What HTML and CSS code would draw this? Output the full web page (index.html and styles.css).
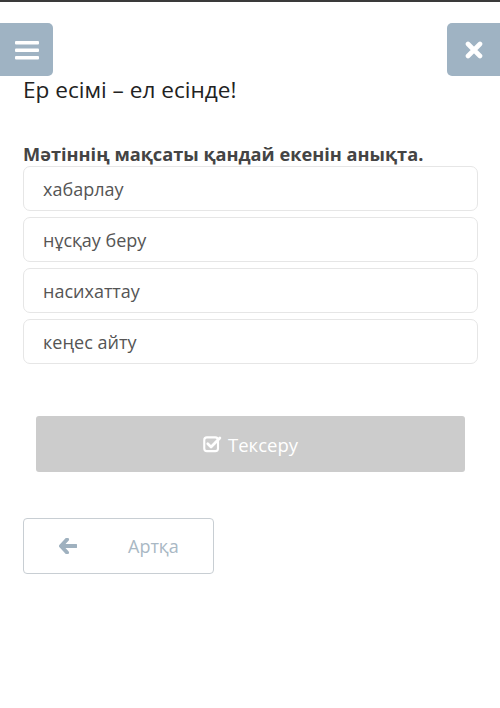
FILE: index.html
```html
<!DOCTYPE html>
<html>
<head>
<meta charset="utf-8">
<link rel="stylesheet" href="styles.css">
</head>
<body>
<div class="topbar"></div>
<div class="header">
  <button class="iconbtn menu" aria-label="menu">
    <svg width="24" height="20" viewBox="0 0 24 20"><rect x="0" y="1" width="24" height="3.4" rx="1" fill="#fff"/><rect x="0" y="8.5" width="24" height="3.4" rx="1" fill="#fff"/><rect x="0" y="16" width="24" height="3.4" rx="1" fill="#fff"/></svg>
  </button>
  <button class="iconbtn close" aria-label="close">
    <svg width="18" height="18" viewBox="0 0 18 18"><path d="M3 3 L15 15 M15 3 L3 15" stroke="#fff" stroke-width="4.6" stroke-linecap="round"/></svg>
  </button>
</div>
<div class="content">
  <h1 class="title">Ер есімі – ел есінде!</h1>
  <p class="question">Мәтіннің мақсаты қандай екенін анықта.</p>
  <div class="options">
    <div class="option">хабарлау</div>
    <div class="option">нұсқау беру</div>
    <div class="option">насихаттау</div>
    <div class="option">кеңес айту</div>
  </div>
  <div class="check-wrap">
    <button class="check">
      <svg width="19" height="18" viewBox="0 0 18 17"><rect x="1.2" y="2.2" width="13" height="13" rx="2.5" fill="none" stroke="#fff" stroke-width="2"/><path d="M4.5 8.3 L7.6 11.3 L16 2.8" fill="none" stroke="#fff" stroke-width="2.6" stroke-linecap="round" stroke-linejoin="round"/></svg>
      <span>Тексеру</span>
    </button>
  </div>
  <button class="back">
    <svg class="arrow" width="18" height="16" viewBox="0 0 18 16"><path d="M8 1.5 L2 8 L8 14.5 M2.5 8 L17 8" fill="none" stroke="#9fb1bf" stroke-width="4" stroke-linecap="round" stroke-linejoin="round"/></svg>
    <span>Артқа</span>
  </button>
</div>
</body>
</html>
```
FILE: styles.css
```css
html, body {
  margin: 0;
  padding: 0;
  background: #fff;
  font-family: "Open Sans", "Noto Sans", sans-serif;
}
.topbar {
  height: 2px;
  background: #3a3a3a;
}
.header {
  display: flex;
  justify-content: space-between;
  margin-top: 21px;
}
.iconbtn {
  width: 53px;
  height: 53px;
  border: none;
  background: #9fb3c3;
  padding: 0;
  display: flex;
  align-items: center;
  justify-content: center;
}
.menu {
  border-radius: 0 5px 5px 0;
}
.close {
  border-radius: 5px 0 0 5px;
}
.content {
  padding: 0 22px 0 23px;
}
.title {
  margin: 0;
  font-weight: 400;
  font-size: 22.6px;
  line-height: 28px;
  color: #222;
}
.question {
  margin: 38px 0 0 0;
  font-weight: 700;
  font-size: 18.2px;
  line-height: 24px;
  color: #444;
}
.options {
  display: flex;
  flex-direction: column;
  gap: 6px;
}
.option {
  height: 45px;
  box-sizing: border-box;
  border: 1px solid #e6e6e6;
  border-radius: 7px;
  padding-left: 19px;
  display: flex;
  align-items: center;
  font-size: 18px;
  color: #555;
}
.check-wrap {
  padding: 0 13px;
  margin-top: 52px;
}
.check {
  width: 100%;
  height: 56px;
  border: none;
  border-radius: 3px;
  background: #cccccc;
  color: #fff;
  font-family: "Open Sans", "Noto Sans", sans-serif;
  font-size: 18.5px;
  display: flex;
  align-items: center;
  justify-content: center;
  gap: 6px;
}
.back {
  margin-top: 46px;
  width: 191px;
  height: 56px;
  border: 1px solid #c8ced3;
  border-radius: 4px;
  background: #fff;
  display: flex;
  align-items: center;
  padding: 0 0 0 35px;
  font-family: "Open Sans", "Noto Sans", sans-serif;
  font-size: 18px;
  color: #a9b8c4;
}
.back .arrow {
  margin-right: 51px;
}
```
